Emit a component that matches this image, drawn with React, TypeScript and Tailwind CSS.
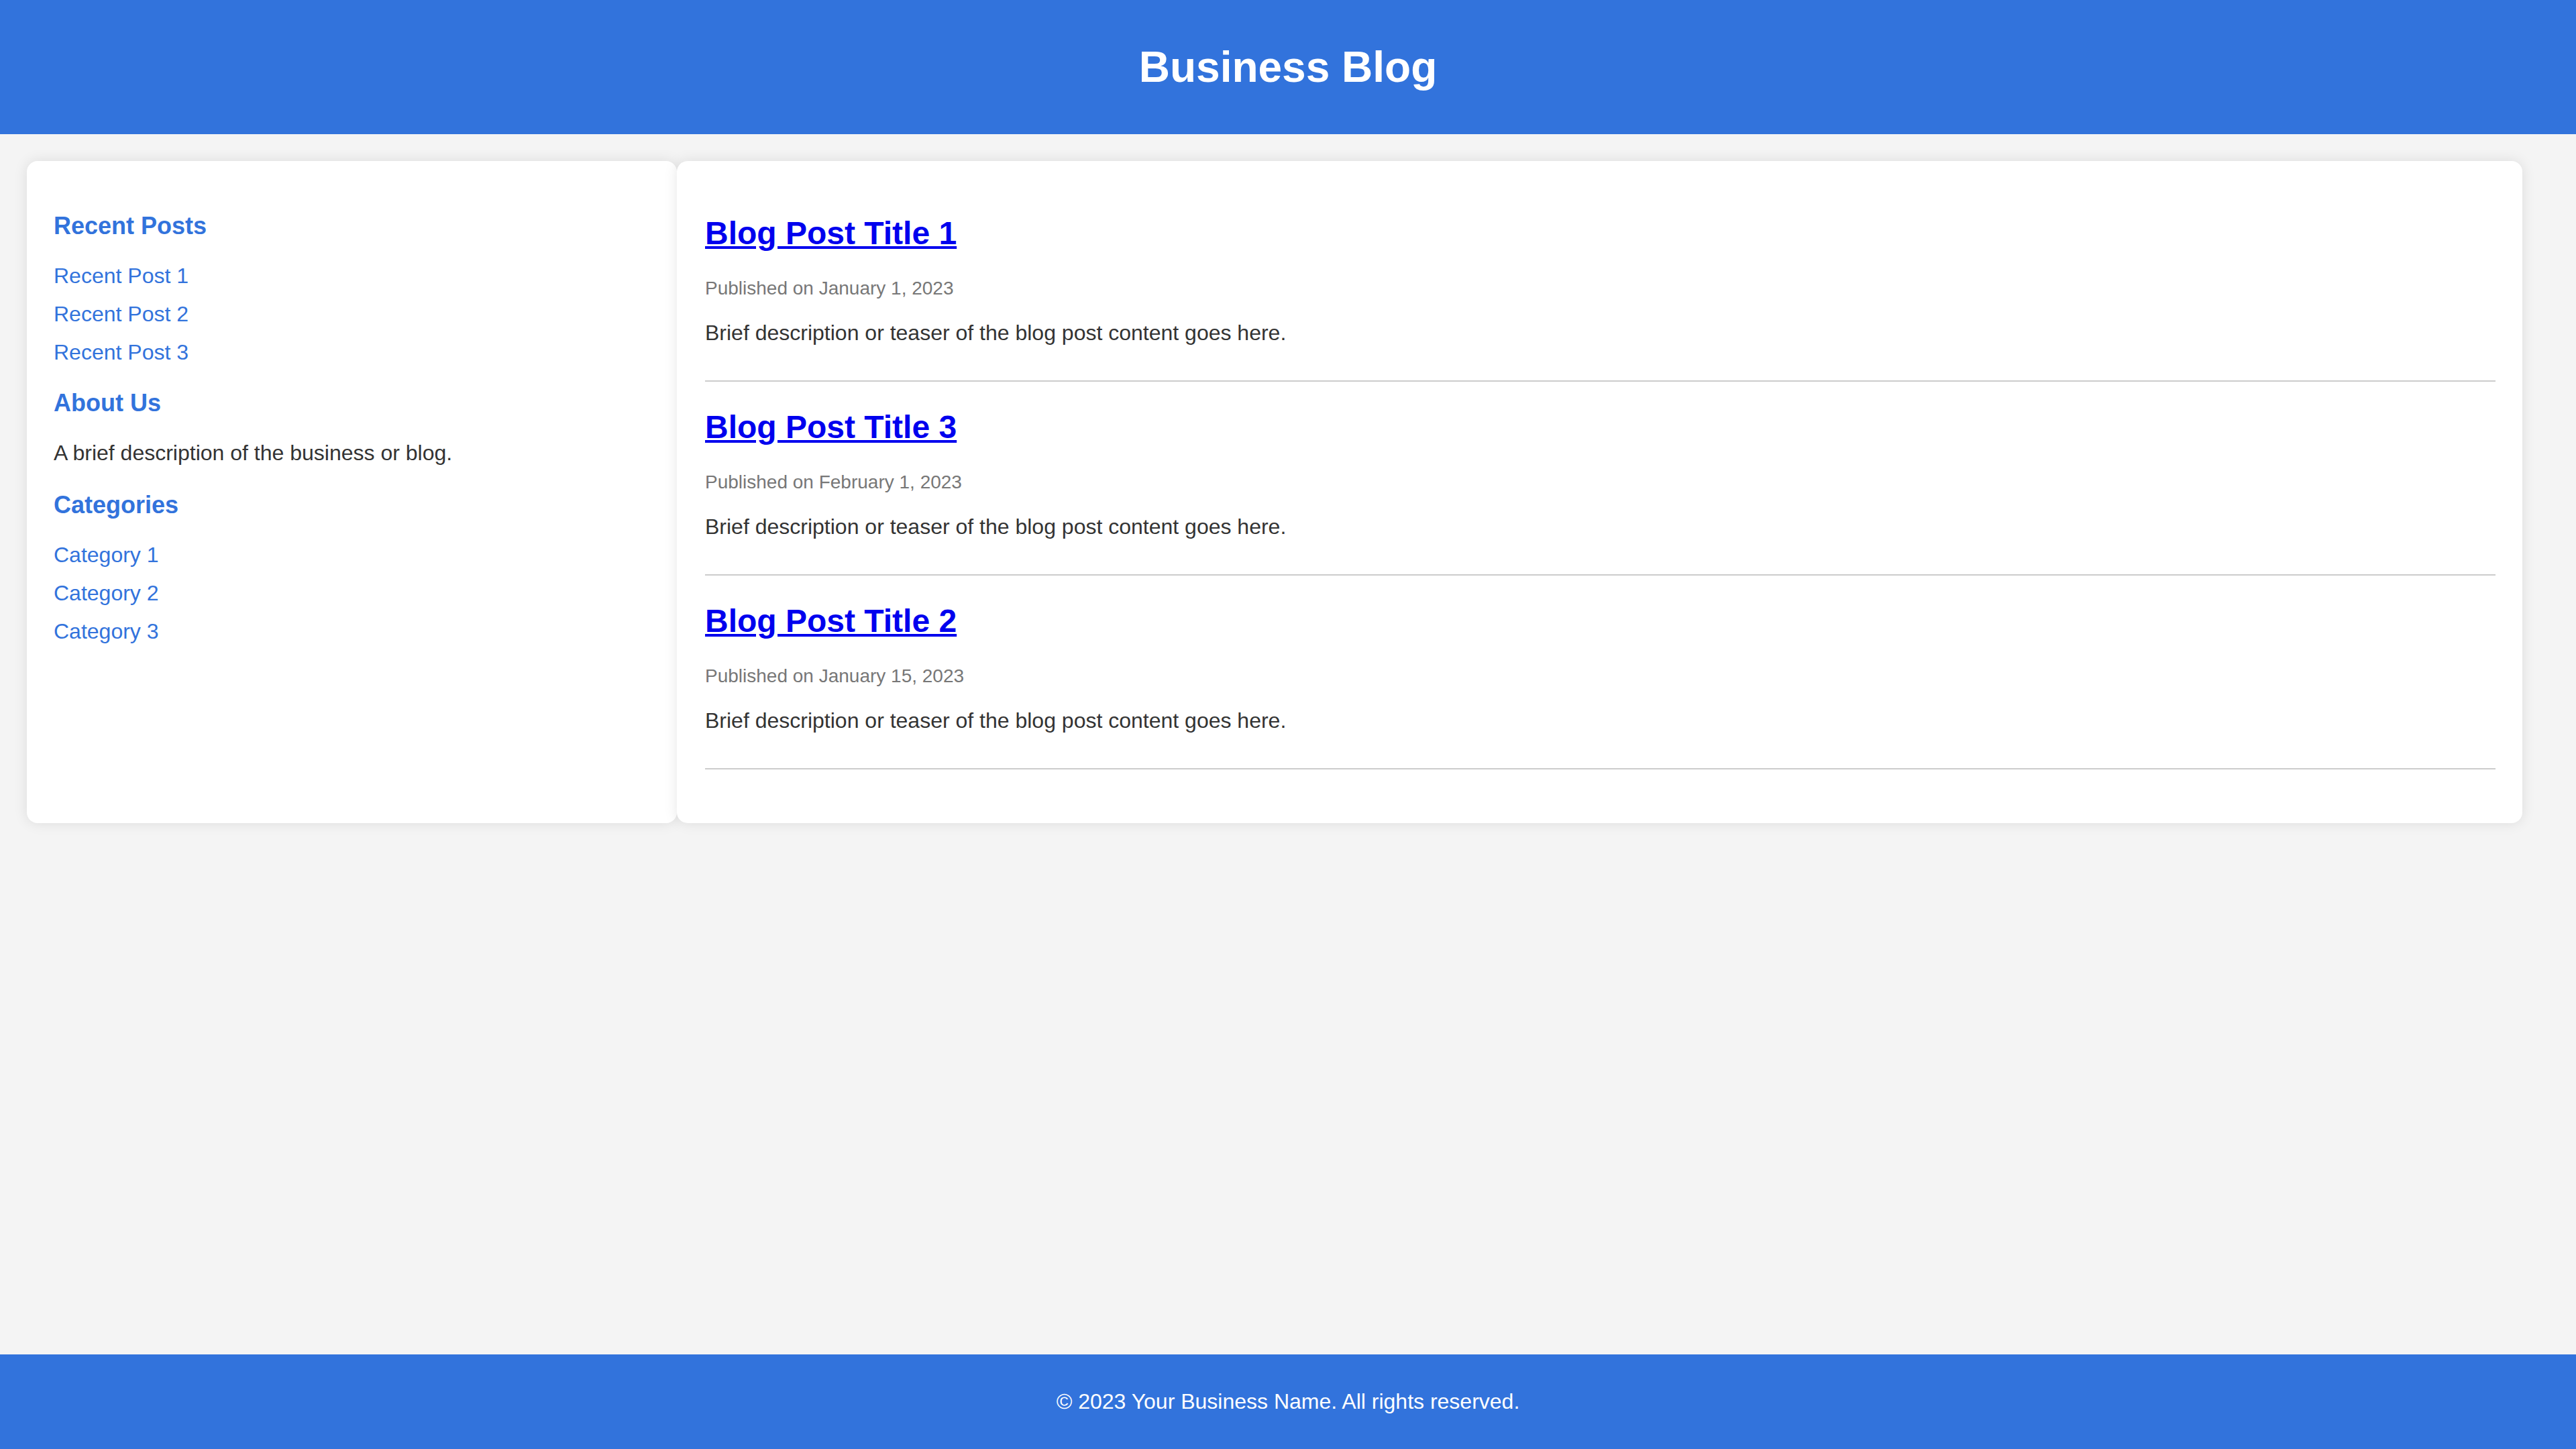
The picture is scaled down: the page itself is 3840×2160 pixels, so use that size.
const recentPosts = ["Recent Post 1", "Recent Post 2", "Recent Post 3"];
const categories = ["Category 1", "Category 2", "Category 3"];

const posts = [
  { title: "Blog Post Title 1", date: "January 1, 2023" },
  { title: "Blog Post Title 3", date: "February 1, 2023" },
  { title: "Blog Post Title 2", date: "January 15, 2023" },
];

function LinkList({ items }: { items: string[] }) {
  return (
    <ul>
      {items.map((item) => (
        <li key={item} className="mb-[20px] text-[32px] leading-[37px]">
          <a href="#" className="text-[#3273dc]">
            {item}
          </a>
        </li>
      ))}
    </ul>
  );
}

function SideHeading({ children }: { children: string }) {
  return (
    <h3 className="my-[36px] text-[36px] leading-[41px] font-bold text-[#3273dc]">
      {children}
    </h3>
  );
}

export default function App() {
  return (
    <div
      className="min-h-screen flex flex-col bg-[#f4f4f4] text-[#333]"
      style={{ fontFamily: '"Liberation Sans", Arial, sans-serif' }}
    >
      <header className="bg-[#3273dc] py-[63px] text-center">
        <h1 className="text-[64px] leading-[74px] font-bold text-white">
          Business Blog
        </h1>
      </header>

      <main className="flex-1 flex items-start pt-[40px] pl-[40px] pr-[80px]">
        <div className="flex w-full items-stretch">
          <aside className="w-[969px] shrink-0 bg-white rounded-[16px] shadow-[0_0_20px_rgba(0,0,0,0.1)] px-[40px] pt-[40px] pb-[40px]">
            <SideHeading>Recent Posts</SideHeading>
            <LinkList items={recentPosts} />
            <SideHeading>About Us</SideHeading>
            <p className="mt-[32px] mb-[38px] text-[32px] leading-[37px]">
              A brief description of the business or blog.
            </p>
            <SideHeading>Categories</SideHeading>
            <LinkList items={categories} />
          </aside>

          <section className="flex-1 bg-white rounded-[16px] shadow-[0_0_20px_rgba(0,0,0,0.1)] pl-[42px] pr-[40px] pt-[40px] pb-[80px]">
            {posts.map((post) => (
              <article
                key={post.title}
                className="pt-[40px] pb-[52px] border-b-2 border-[#ccc]"
              >
                <h2 className="text-[48px] leading-[55px] font-bold">
                  <a href="#" className="text-[#0000ee] underline">
                    {post.title}
                  </a>
                </h2>
                <p className="mt-[39px] text-[28px] leading-[32px] text-[#777]">
                  Published on {post.date}
                </p>
                <p className="mt-[32px] text-[32px] leading-[37px]">
                  Brief description or teaser of the blog post content goes
                  here.
                </p>
              </article>
            ))}
          </section>
        </div>
      </main>

      <footer className="bg-[#3273dc] py-[52px] text-center">
        <p className="text-[32px] leading-[37px] text-white">
          © 2023 Your Business Name. All rights reserved.
        </p>
      </footer>
    </div>
  );
}
